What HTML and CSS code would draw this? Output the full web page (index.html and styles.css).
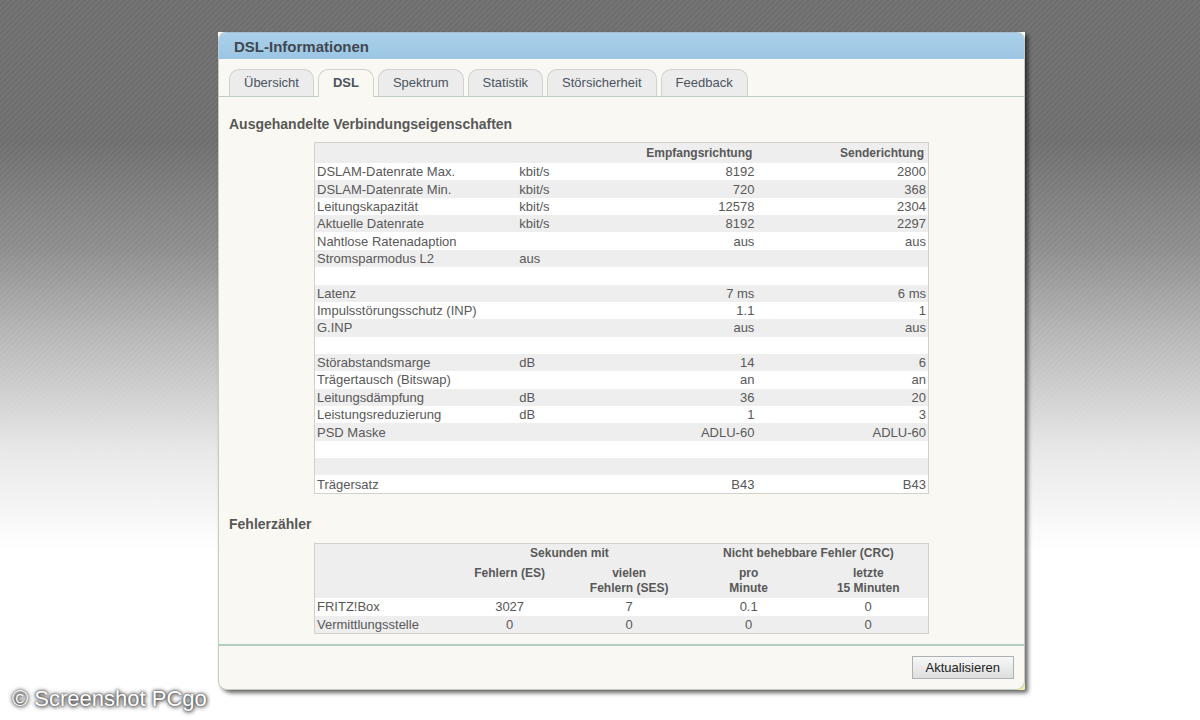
FILE: index.html
```
<!DOCTYPE html>
<html lang="de">
<head>
<meta charset="utf-8">
<title>DSL-Informationen</title>
<link rel="stylesheet" href="styles.css">
</head>
<body>
<div class="backdrop"></div>
<main class="frame">
  <div class="window">
    <header class="title-bar"><h1 class="title">DSL-Informationen</h1></header>
    <nav class="tabs">
      <a class="tab" href="#">Übersicht</a>
      <a class="tab active" href="#">DSL</a>
      <a class="tab" href="#">Spektrum</a>
      <a class="tab" href="#">Statistik</a>
      <a class="tab" href="#">Störsicherheit</a>
      <a class="tab" href="#">Feedback</a>
    </nav>
    <section class="section">
      <h2 class="heading">Ausgehandelte Verbindungseigenschaften</h2>
      <table class="grid rates">
        <colgroup><col class="c-name"><col class="c-unit"><col class="c-down"><col class="c-up"></colgroup>
        <thead><tr><th></th><th></th><th>Empfangsrichtung</th><th>Senderichtung</th></tr></thead>
        <tbody>
          <tr><td>DSLAM-Datenrate Max.</td><td>kbit/s</td><td>8192</td><td>2800</td></tr>
          <tr><td>DSLAM-Datenrate Min.</td><td>kbit/s</td><td>720</td><td>368</td></tr>
          <tr><td>Leitungskapazität</td><td>kbit/s</td><td>12578</td><td>2304</td></tr>
          <tr><td>Aktuelle Datenrate</td><td>kbit/s</td><td>8192</td><td>2297</td></tr>
          <tr><td>Nahtlose Ratenadaption</td><td></td><td>aus</td><td>aus</td></tr>
          <tr><td>Stromsparmodus L2</td><td>aus</td><td></td><td></td></tr>
          <tr><td>&nbsp;</td><td></td><td></td><td></td></tr>
          <tr><td>Latenz</td><td></td><td>7 ms</td><td>6 ms</td></tr>
          <tr><td>Impulsstörungsschutz (INP)</td><td></td><td>1.1</td><td>1</td></tr>
          <tr><td>G.INP</td><td></td><td>aus</td><td>aus</td></tr>
          <tr><td>&nbsp;</td><td></td><td></td><td></td></tr>
          <tr><td>Störabstandsmarge</td><td>dB</td><td>14</td><td>6</td></tr>
          <tr><td>Trägertausch (Bitswap)</td><td></td><td>an</td><td>an</td></tr>
          <tr><td>Leitungsdämpfung</td><td>dB</td><td>36</td><td>20</td></tr>
          <tr><td>Leistungsreduzierung</td><td>dB</td><td>1</td><td>3</td></tr>
          <tr><td>PSD Maske</td><td></td><td>ADLU-60</td><td>ADLU-60</td></tr>
          <tr><td>&nbsp;</td><td></td><td></td><td></td></tr>
          <tr><td>&nbsp;</td><td></td><td></td><td></td></tr>
          <tr><td>Trägersatz</td><td></td><td>B43</td><td>B43</td></tr>
        </tbody>
      </table>
    </section>
    <section class="section">
      <h2 class="heading">Fehlerzähler</h2>
      <table class="grid errors">
        <colgroup><col class="c-device"><col><col><col><col></colgroup>
        <thead>
          <tr><th></th><th colspan="2">Sekunden mit</th><th colspan="2">Nicht behebbare Fehler (CRC)</th></tr>
          <tr><th></th><th>Fehlern (ES)</th><th>vielen<br>Fehlern (SES)</th><th>pro<br>Minute</th><th>letzte<br>15 Minuten</th></tr>
        </thead>
        <tbody>
          <tr><td>FRITZ!Box</td><td>3027</td><td>7</td><td>0.1</td><td>0</td></tr>
          <tr><td>Vermittlungsstelle</td><td>0</td><td>0</td><td>0</td><td>0</td></tr>
        </tbody>
      </table>
    </section>
    <footer class="actions"><button class="button" type="button">Aktualisieren</button></footer>
  </div>
</main>
<div class="credit">© Screenshot PCgo</div>
</body>
</html>
```
FILE: styles.css
```
* { box-sizing: border-box; }
body {
  margin: 0;
  min-height: 100vh;
  padding: 32px 175px 30px 218px;
  background: #fff;
  color: #585858;
  font: 13px/17px "Liberation Sans", Arial, sans-serif;
}
.backdrop {
  position: absolute;
  inset: 0;
  z-index: -1;
  background:
    linear-gradient(rgba(255,255,255,0) 0, rgba(255,255,255,0) 140px, rgba(255,255,255,.22) 250px, rgba(255,255,255,.5) 335px, rgba(255,255,255,.84) 450px, #fff 550px),
    repeating-linear-gradient(135deg, #6b6b6b 0, #777 2px, #6b6b6b 4px);
}
.frame {
  background: linear-gradient(#fdfdf5 0, #fdfdf5 50%, #f3efa5 100%);
  border-radius: 0 0 2px 10px;
  box-shadow: 3px 3px 4px rgba(0,0,0,.6);
}
.window {
  overflow: hidden;
  background: #faf8f3;
  border: 1px solid #c2cbc4;
  border-top-color: #a5bfd0;
  border-radius: 8px 8px 9px 9px;
}
.title-bar {
  padding: 5px 15px 4px;
  background: linear-gradient(#aad0ea, #9bc6e3);
}
.title { margin: 0; font-size: 15px; line-height: 17px; color: #404850; }
.tabs {
  display: flex;
  gap: 4px;
  padding: 10px 10px 0;
  border-bottom: 1px solid #c2cbc6;
}
.tab {
  padding: 4px 14px 5px;
  border: 1px solid #d0d0ce;
  border-bottom: 0;
  border-radius: 10px 10px 0 0;
  background: #ececec;
  color: #4a535e;
  text-decoration: none;
}
.active { margin-bottom: -1px; background: #faf8f3; font-weight: bold; }
.section { padding: 0 10px; }
.heading { margin: 0; padding: 19px 0 9px; font-size: 14px; line-height: 17px; }
.section + .section .heading { padding-top: 22px; padding-bottom: 10px; }
.grid {
  width: calc(100% - 170px);
  margin: 0 85px;
  border: 1px solid #d2d1c9;
  border-spacing: 0;
  table-layout: fixed;
  background: #fff;
}
.grid th, .grid td { padding: 0 2px; text-align: left; }
.grid thead { background: #eee; }
.grid tbody tr:nth-child(even) { background: #eee; }
.rates { height: 352px; }
.rates th { height: 20px; }
.rates .c-name { width: 33%; }
.rates .c-unit { width: 16%; }
.rates .c-up { width: 28%; }
.rates th:nth-child(n+3), .rates td:nth-child(n+3) { text-align: right; }
.rates th:nth-child(n+3) { padding-right: 4px; }
.errors .c-device { width: 22%; }
.errors th:nth-child(n+2), .errors td:nth-child(n+2) { text-align: center; }
.errors th { padding: 2px; font-size: 12px; line-height: 15px; vertical-align: top; }
.errors tr + tr th { padding-top: 3px; }
.errors { height: 91px; }
.rates th { font-size: 12px; }
.actions {
  display: flex;
  justify-content: flex-end;
  margin-top: 10px;
  padding: 10px;
  border-top: 2px solid #b5ccc2;
}
.button {
  padding: 2px 13px;
  border: 1px solid #acb2b4;
  background: linear-gradient(#f7f7f7, #dedede);
  color: #222;
  font: 13px/17px "Liberation Sans", Arial, sans-serif;
}
.credit {
  position: absolute;
  left: 12px;
  bottom: 8px;
  color: #fff;
  font-size: 22px;
  line-height: 26px;
  text-shadow: 0 0 2px #444, 0 0 4px #444, 1px 1px 4px #555;
}
```
